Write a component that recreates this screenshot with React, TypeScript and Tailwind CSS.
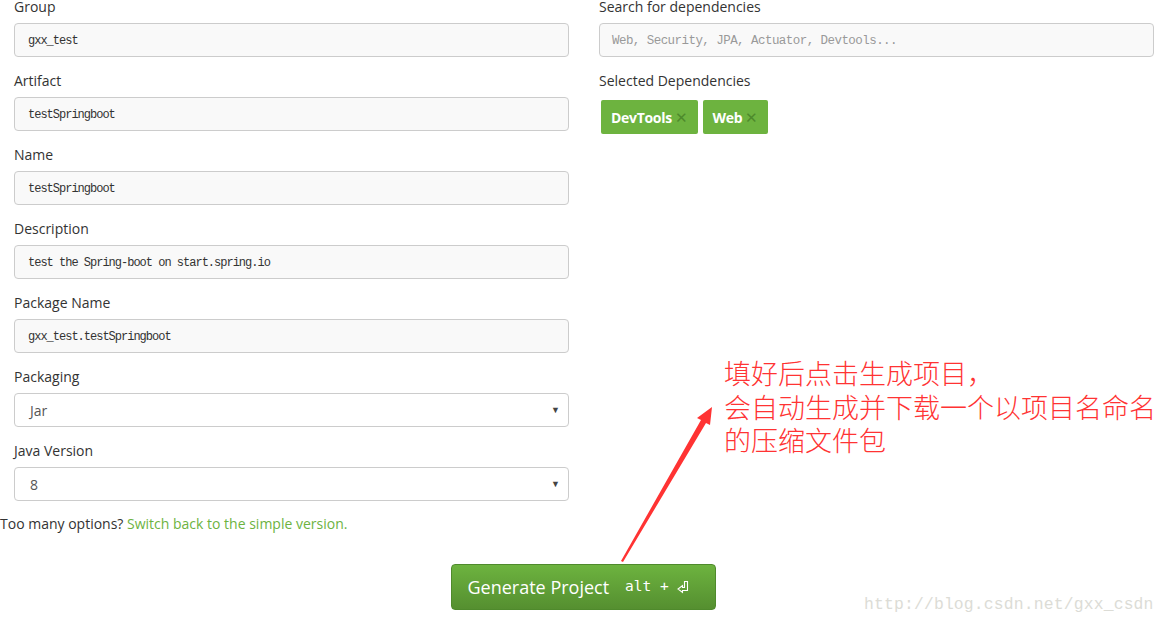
import React from "react"

const labelFont = { fontFamily: '"Open Sans", "Noto Sans", sans-serif' }

function Field({ label, value }: { label: string; value: string }) {
  return (
    <div className="mb-[14px]">
      <div className="h-[20px] mb-[6px] text-[14px] leading-[20px] text-[#333]">{label}</div>
      <div className="h-[34px] rounded-[4px] border border-[#ccc] bg-[#f9f9f9] px-[13px] pt-[2px] flex items-center text-[#333] font-['Liberation_Mono',monospace] text-[12px] tracking-[-1px]">
        {value}
      </div>
    </div>
  )
}

function SelectField({ label, value }: { label: string; value: string }) {
  return (
    <div className="mb-[14px]">
      <div className="h-[20px] mb-[6px] text-[14px] leading-[20px] text-[#333]">{label}</div>
      <div className="h-[34px] rounded-[4px] border border-[#ccc] bg-white pl-[15px] pr-[8px] flex items-center justify-between text-[14px] text-[#555]">
        <span>{value}</span>
        <span className="text-[9px] text-[#444]">▼</span>
      </div>
    </div>
  )
}

function Tag({ name }: { name: string }) {
  return (
    <div className="h-[34px] rounded-[2px] bg-[#6db33f] px-[10px] flex items-center gap-[3px] text-white text-[14px] font-bold tracking-[-0.3px]">
      {name}
      <span className="text-[#4d8a2c] font-normal text-[15px]">✕</span>
    </div>
  )
}

export default function App() {
  return (
    <div className="relative w-[1165px] h-[623px] overflow-hidden bg-white" style={labelFont}>
      <div className="grid grid-cols-[584px_581px] mt-[-3px]">
        <div className="pl-[14px] pr-[15px]">
          <Field label="Group" value="gxx_test" />
          <Field label="Artifact" value="testSpringboot" />
          <Field label="Name" value="testSpringboot" />
          <Field label="Description" value="test the Spring-boot on start.spring.io" />
          <Field label="Package Name" value="gxx_test.testSpringboot" />
          <SelectField label="Packaging" value="Jar" />
          <SelectField label="Java Version" value="8" />
        </div>
        <div className="pl-[15px] pr-[11px]">
          <div className="h-[20px] mb-[6px] text-[14px] leading-[20px] text-[#333]">Search for dependencies</div>
          <div className="h-[34px] rounded-[4px] border border-[#ccc] bg-[#f9f9f9] px-[12px] pt-[2px] flex items-center text-[#999] font-['Liberation_Mono',monospace] text-[12.5px] tracking-[-0.55px]">
            Web, Security, JPA, Actuator, Devtools...
          </div>
          <div className="h-[20px] mt-[14px] mb-[9px] text-[14px] leading-[20px] text-[#333]">Selected Dependencies</div>
          <div className="flex gap-[5px] pl-[2px]">
            <Tag name="DevTools" />
            <Tag name="Web" />
          </div>
        </div>
      </div>

      <div className="mt-[-1px] text-[14px] leading-[20px] text-[#333]">
        Too many options? <span className="text-[#6db33f]">Switch back to the simple version.</span>
      </div>

      <div className="flex justify-center mt-[30px] pl-[1px]">
        <div className="w-[265px] h-[46px] rounded-[4px] border border-[#4f8a2c] bg-gradient-to-b from-[#6db33f] to-[#558f30] flex items-center gap-[16px] pl-[16px] text-white">
          <span className="text-[18px]">Generate Project</span>
          <span className="flex items-center gap-[8px] font-['DejaVu_Sans_Mono',monospace] text-[14.5px]">
            alt +
            <svg width="12" height="14" viewBox="0 0 12 14" fill="none" stroke="white" strokeWidth="1.1">
              <path d="M7.5 1.5 H10.5 V10.5 H5.5 V12.5 L1 9 L5.5 5.5 V7.5 H7.5 Z" />
            </svg>
          </span>
        </div>
      </div>

      <svg className="absolute left-0 top-0 pointer-events-none" width="1165" height="623">
        <polygon points="621,561 701,420 697,418 712,407 710,425 706,423 623,562" fill="#ff3333" />
      </svg>

      <div className="absolute left-[724px] top-[356px] text-[#ff3333] text-[27px] leading-[33.5px] font-['Noto_Sans_CJK_SC',sans-serif] font-light">
        <div>填好后点击生成项目，</div>
        <div>会自动生成并下载一个以项目名命名</div>
        <div>的压缩文件包</div>
      </div>

      <div className="absolute left-[864px] top-[593px] text-[#dcdcd6] text-[16.4px] font-['Liberation_Mono',monospace] tracking-[0.15px]">
        http://blog.csdn.net/gxx_csdn
      </div>
    </div>
  )
}
